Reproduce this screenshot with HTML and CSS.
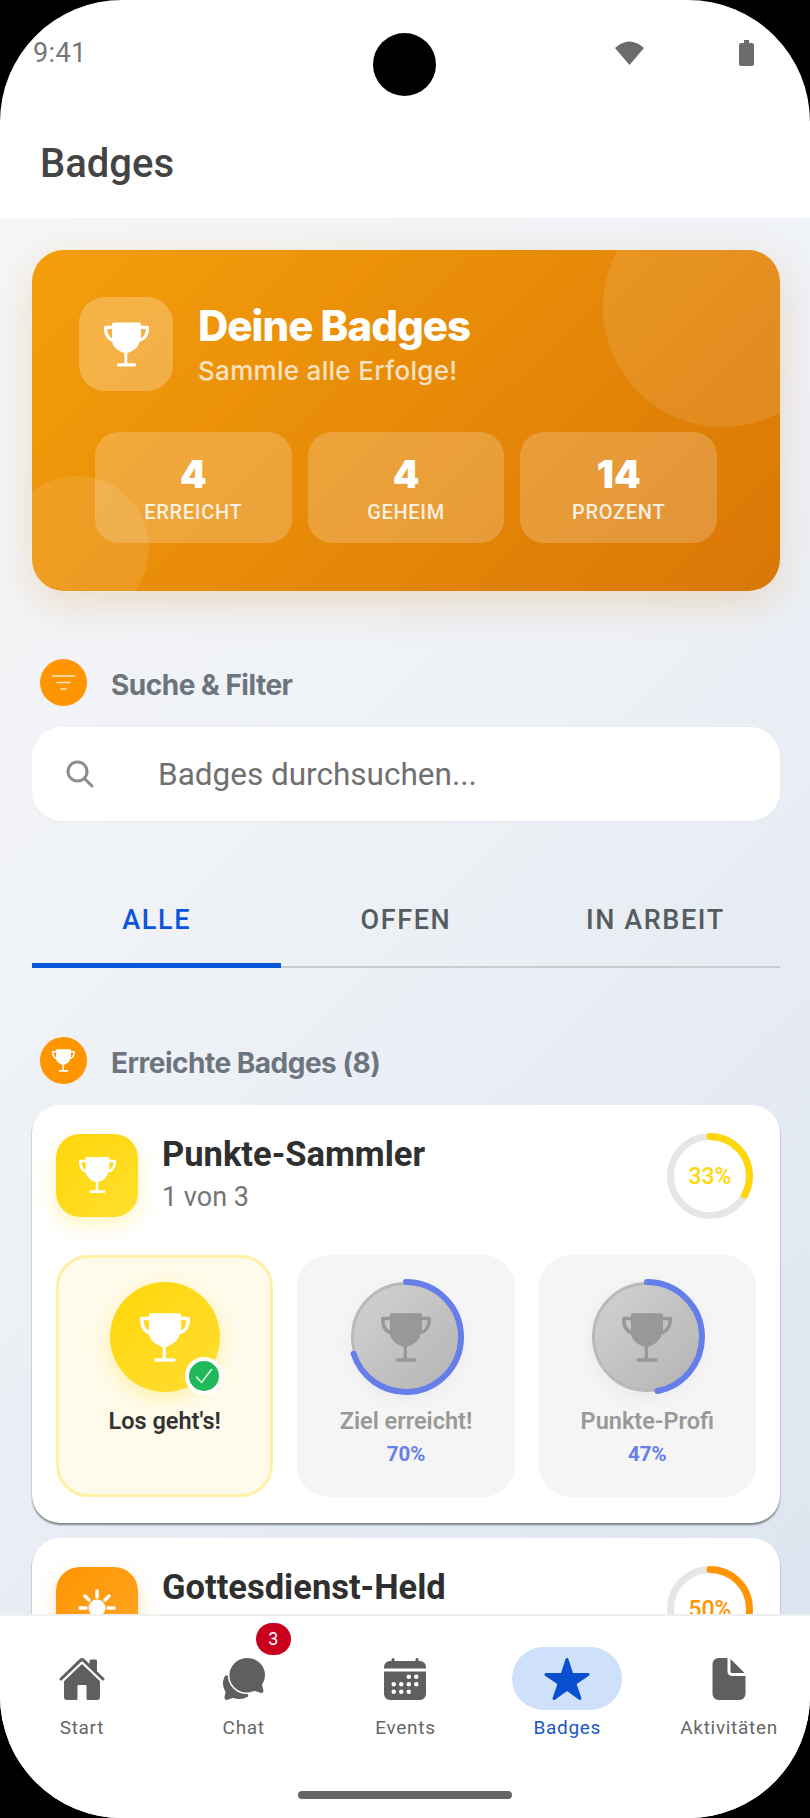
FILE: index.html
```html
<!DOCTYPE html>
<html lang="de">

<head>
    <meta charset="UTF-8">
    <meta name="viewport" content="width=device-width, initial-scale=1.0">
    <title>Badges</title>
    <link rel="stylesheet" href="styles.css">
</head>

<body>
    <svg class="defs" width="0" height="0">
        <symbol id="trophy" viewBox="32 48 448 436">
            <path fill="currentColor" fill-rule="evenodd" d="M464 80H400V64a16 16 0 0 0-16-16H128a16 16 0 0 0-16 16V80H48a16 16 0 0 0-16 16v16c0 54 30 112 76 125a8 8 0 0 1 6 6c6 27 24 52 51 73 21 16 44 27 64 32a8 8 0 0 1 6 8V444a8 8 0 0 1-8 8H176a16 16 0 0 0 0 32H336a16 16 0 0 0 0-32H272a8 8 0 0 1-8-8V356a8 8 0 0 1 6-8c20-5 43-16 64-32 27-21 45-46 51-73a8 8 0 0 1 6-6C450 224 480 166 480 112V96a16 16 0 0 0-16-16zM112 198a4 4 0 0 1-6 3c-10-6-18-15-23-24-8-12-18-34-19-65h44a4 4 0 0 1 4 4zM448 112c-1 31-11 53-19 65-5 9-13 18-23 24a4 4 0 0 1-6-3V116a4 4 0 0 1 4-4z" />
        </symbol>
    </svg>

    <div class="phone">
        <div class="camera"></div>

        <div class="status">
            <span class="time">9:41</span>
            <div class="status-icons">
                <svg class="wifi" viewBox="0 0 29 25">
                    <path fill="#6b6b6b" d="M0 8Q14.500-5 29 8L14.500 25Z" />
                </svg>
                <svg class="battery" viewBox="0 0 15 26">
                    <path fill="#6b6b6b" d="M5 0h5v3h3a2 2 0 0 1 2 2v19a2 2 0 0 1-2 2H2a2 2 0 0 1-2-2V5a2 2 0 0 1 2-2h3z" />
                </svg>
            </div>
        </div>

        <header class="header">
            <h1>Badges</h1>
        </header>

        <main class="content">
            <section class="hero">
                <div class="hero-circle top"></div>
                <div class="hero-circle bottom"></div>
                <div class="hero-head">
                    <div class="hero-icon">
                        <svg class="trophy-hero"><use href="#trophy" /></svg>
                    </div>
                    <div>
                        <h2>Deine Badges</h2>
                        <p>Sammle alle Erfolge!</p>
                    </div>
                </div>
                <div class="stats">
                    <div class="stat"><b>4</b><span>ERREICHT</span></div>
                    <div class="stat"><b>4</b><span>GEHEIM</span></div>
                    <div class="stat"><b>14</b><span>PROZENT</span></div>
                </div>
            </section>

            <div class="section-head first">
                <div class="section-icon">
                    <svg width="25" height="20" viewBox="0 0 25 20">
                        <path fill="none" stroke="#ffe9c4" stroke-width="1.600" stroke-linecap="round" d="M1.500 3h22M6 9.500h13M10 16h5" />
                    </svg>
                </div>
                <h3>Suche &amp; Filter</h3>
            </div>

            <div class="search">
                <svg width="28" height="28" viewBox="0 0 28 28">
                    <circle cx="11.500" cy="11.500" r="9.500" fill="none" stroke="#8c8c8c" stroke-width="3" />
                    <path d="M18.500 18.500L26 26" fill="none" stroke="#8c8c8c" stroke-width="3" stroke-linecap="round" />
                </svg>
                <span>Badges durchsuchen...</span>
            </div>

            <div class="tabs">
                <div class="tab active">ALLE</div>
                <div class="tab">OFFEN</div>
                <div class="tab">IN ARBEIT</div>
            </div>

            <div class="section-head">
                <div class="section-icon">
                    <svg class="trophy-small"><use href="#trophy" /></svg>
                </div>
                <h3>Erreichte Badges (8)</h3>
            </div>

            <section class="card">
                <div class="card-head">
                    <div class="card-icon yellow">
                        <svg class="trophy-card"><use href="#trophy" /></svg>
                    </div>
                    <div class="card-title">
                        <h4>Punkte-Sammler</h4>
                        <p>1 von 3</p>
                    </div>
                    <div class="ring ring-yellow">
                        <svg viewBox="0 0 86 86">
                            <circle class="ring-track" cx="43" cy="43" r="39.500" />
                            <circle class="ring-value" cx="43" cy="43" r="39.500" pathLength="100" stroke-dasharray="33 100" transform="rotate(-90 43 43)" />
                        </svg>
                        <span>33%</span>
                    </div>
                </div>

                <div class="tiles">
                    <div class="tile done">
                        <div class="medal">
                            <div class="disc gold">
                                <svg class="trophy-tile"><use href="#trophy" /></svg>
                            </div>
                            <div class="check">
                                <svg width="20" height="20" viewBox="0 0 20 20">
                                    <path d="M2.500 11l5 5.500L17.500 3.500" fill="none" stroke="#e6f8ec" stroke-width="1.500" stroke-linecap="round" stroke-linejoin="round" />
                                </svg>
                            </div>
                        </div>
                        <div class="tile-name">Los geht's!</div>
                    </div>

                    <div class="tile">
                        <div class="medal">
                            <div class="disc grey">
                                <svg class="trophy-tile"><use href="#trophy" /></svg>
                            </div>
                            <svg class="medal-ring" viewBox="0 0 116 116">
                                <circle cx="58" cy="58" r="55" pathLength="100" stroke-dasharray="70 100" transform="rotate(-90 58 58)" />
                            </svg>
                        </div>
                        <div class="tile-name">Ziel erreicht!</div>
                        <div class="tile-percent">70%</div>
                    </div>

                    <div class="tile">
                        <div class="medal">
                            <div class="disc grey">
                                <svg class="trophy-tile"><use href="#trophy" /></svg>
                            </div>
                            <svg class="medal-ring" viewBox="0 0 116 116">
                                <circle cx="58" cy="58" r="55" pathLength="100" stroke-dasharray="47 100" transform="rotate(-90 58 58)" />
                            </svg>
                        </div>
                        <div class="tile-name">Punkte-Profi</div>
                        <div class="tile-percent">47%</div>
                    </div>
                </div>
            </section>

            <section class="card">
                <div class="card-head">
                    <div class="card-icon orange">
                        <svg width="44" height="44" viewBox="0 0 44 44">
                            <circle cx="22" cy="22" r="8.500" fill="#fff" />
                            <path fill="none" stroke="#fff" stroke-width="3.500" stroke-linecap="round" d="M22 5v6M22 33v6M5 22h6M33 22h6M10 10l4 4M34 10l-4 4M10 34l4-4M34 34l-4-4" />
                        </svg>
                    </div>
                    <div class="card-title">
                        <h4>Gottesdienst-Held</h4>
                    </div>
                    <div class="ring ring-orange">
                        <svg viewBox="0 0 86 86">
                            <circle class="ring-track" cx="43" cy="43" r="39.500" />
                            <circle class="ring-value" cx="43" cy="43" r="39.500" pathLength="100" stroke-dasharray="50 100" transform="rotate(-90 43 43)" />
                        </svg>
                        <span>50%</span>
                    </div>
                </div>
            </section>
        </main>

        <nav class="nav">
            <div class="nav-items">
                <div class="nav-item">
                    <div class="nav-icon">
                        <svg viewBox="0 0 512 512">
                            <path d="M261.560 101.280a8 8 0 0 0-11.060 0L66.400 277.150a8 8 0 0 0-2.470 5.790L63.900 448a32 32 0 0 0 32 32H192a16 16 0 0 0 16-16V328a8 8 0 0 1 8-8h80a8 8 0 0 1 8 8v136a16 16 0 0 0 16 16h96.060a32 32 0 0 0 32-32V282.940a8 8 0 0 0-2.470-5.790z" />
                            <path d="M490.910 244.150l-74.800-71.560V64a16 16 0 0 0-16-16h-48a16 16 0 0 0-16 16v32l-57.920-55.380C272.770 35.140 264.710 32 256 32c-8.680 0-16.720 3.140-22.140 8.630l-212.700 203.500c-6.220 6-7 15.870-1.340 22.370A16 16 0 0 0 43 267.560L250.500 69.280a8 8 0 0 1 11.060 0l207.520 198.280a16 16 0 0 0 22.590-.44c6.140-6.360 5.630-16.860-.76-22.970z" />
                        </svg>
                    </div>
                    <span>Start</span>
                </div>
                <div class="nav-item">
                    <div class="nav-icon">
                        <svg viewBox="0 0 512 512">
                            <path d="M439.900 405.600a26.770 26.770 0 0 1-9.590-2l-56.780-20.130-.42-.17a9.880 9.880 0 0 0-3.910-.76 10.320 10.320 0 0 0-3.620.66c-1.380.52-13.810 5.190-26.850 8.770-7.070 1.940-31.680 8.270-51.430 8.270-50.480 0-97.680-19.400-132.890-54.630A183.380 183.380 0 0 1 100.300 215.100a175.900 175.900 0 0 1 4.060-37.580c8.790-40.620 32.070-77.570 65.550-104A194.760 194.760 0 0 1 290.300 32c52.210 0 100.860 20 137 56.180 34.160 34.270 52.880 79.330 52.730 126.870a177.860 177.860 0 0 1-30.300 99.150l-.19.280-.74 1c-.17.230-.34.450-.5.680l-.15.270a21.630 21.630 0 0 0-1.080 2.090l15.740 55.940a26.420 26.420 0 0 1 1.120 7.110 24 24 0 0 1-24.030 24.030z" />
                            <path d="M299.870 425.390a15.740 15.740 0 0 0-10.290-8.100c-5.780-1.530-12.520-1.270-17.670-1.650a201.780 201.780 0 0 1-128.820-58.750A199.210 199.210 0 0 1 86.400 244.160C85 234.420 85 232 85 232a16 16 0 0 0-28-10.580s-7.880 8.580-11.600 17.190a162.090 162.090 0 0 0 11.160 150.060C59 393 59 395 58.420 399.500c-2.730 14.110-7.510 39-10 51.910a24 24 0 0 0 8 22.920l.46.390A24.340 24.340 0 0 0 72 480a23.420 23.420 0 0 0 9-1.790l53.510-20.650a8.050 8.050 0 0 1 5.720 0c21.070 7.840 43 12 63.780 12a176 176 0 0 0 74.910-16.660c5.460-2.560 14-5.340 19-11.120a15 15 0 0 0 1.950-16.380z" />
                        </svg>
                        <div class="nav-badge">3</div>
                    </div>
                    <span>Chat</span>
                </div>
                <div class="nav-item">
                    <div class="nav-icon">
                        <svg viewBox="0 0 512 512">
                            <path d="M480 128a64 64 0 0 0-64-64h-16V48.450c0-8.610-6.620-16-15.230-16.430A16 16 0 0 0 368 48v16H144V48.450c0-8.610-6.620-16-15.230-16.430A16 16 0 0 0 112 48v16H96a64 64 0 0 0-64 64v12a4 4 0 0 0 4 4h440a4 4 0 0 0 4-4zM32 416a64 64 0 0 0 64 64h320a64 64 0 0 0 64-64V179a3 3 0 0 0-3-3H35a3 3 0 0 0-3 3zm344-208a24 24 0 1 1-24 24 24 24 0 0 1 24-24zm0 80a24 24 0 1 1-24 24 24 24 0 0 1 24-24zm-80-80a24 24 0 1 1-24 24 24 24 0 0 1 24-24zm0 80a24 24 0 1 1-24 24 24 24 0 0 1 24-24zm0 80a24 24 0 1 1-24 24 24 24 0 0 1 24-24zm-80-80a24 24 0 1 1-24 24 24 24 0 0 1 24-24zm0 80a24 24 0 1 1-24 24 24 24 0 0 1 24-24zm-80-80a24 24 0 1 1-24 24 24 24 0 0 1 24-24zm0 80a24 24 0 1 1-24 24 24 24 0 0 1 24-24z" />
                        </svg>
                    </div>
                    <span>Events</span>
                </div>
                <div class="nav-item active">
                    <div class="nav-icon">
                        <svg viewBox="0 0 512 512">
                            <path d="M394 480a16 16 0 0 1-9.390-3L256 383.760 127.390 477a16 16 0 0 1-24.550-18.080L153 310.350 23 221.200a16 16 0 0 1 9-29.200h160.380l48.400-148.950a16 16 0 0 1 30.440 0l48.400 149H480a16 16 0 0 1 9.050 29.200L359 310.350l50.130 148.530A16 16 0 0 1 394 480z" />
                        </svg>
                    </div>
                    <span>Badges</span>
                </div>
                <div class="nav-item">
                    <div class="nav-icon">
                        <svg viewBox="0 0 512 512">
                            <path d="M428 224H288a48 48 0 0 1-48-48V36a4 4 0 0 0-4-4h-92a64 64 0 0 0-64 64v320a64 64 0 0 0 64 64h224a64 64 0 0 0 64-64V228a4 4 0 0 0-4-4z" />
                            <path d="M419.220 188.590L275.410 44.780a2 2 0 0 0-3.410 1.410V176a16 16 0 0 0 16 16h129.810a2 2 0 0 0 1.410-3.410z" />
                        </svg>
                    </div>
                    <span>Aktivitäten</span>
                </div>
            </div>
            <div class="home-bar"></div>
        </nav>
    </div>
</body>

</html>
```

FILE: styles.css
```css
* {
    box-sizing: border-box;
}

html,
body {
    margin: 0;
    padding: 0;
    background: #000;
}

h1,
h2,
h3,
h4,
p {
    margin: 0;
}

svg {
    display: block;
}

.defs {
    position: absolute;
}

.phone {
    position: relative;
    width: 810px;
    height: 1818px;
    border-radius: 122px;
    overflow: hidden;
    background: #fff;
    display: flex;
    flex-direction: column;
    font-family: Roboto, "Noto Sans", sans-serif;
}

.camera {
    position: absolute;
    left: 373px;
    top: 33px;
    width: 63px;
    height: 63px;
    border-radius: 50%;
    background: #000;
}

/* status bar */
.status {
    height: 100px;
    padding: 37px 56px 0 33px;
    display: flex;
    justify-content: space-between;
    align-items: flex-start;
}

.time {
    font-size: 27px;
    line-height: 32px;
    letter-spacing: 0.4px;
    color: #757575;
}

.status-icons {
    display: flex;
    gap: 95px;
    padding-top: 3px;
}

.wifi {
    width: 29px;
    height: 25px;
}

.battery {
    width: 15px;
    height: 26px;
}

/* header */
.header {
    height: 118px;
    padding: 39px 40px 0;
}

.header h1 {
    font-size: 40px;
    line-height: 50px;
    font-weight: 500;
    color: #444;
}

/* scrolling part */
.content {
    flex: 1;
    min-height: 0;
    overflow: hidden;
    padding: 32px 30px 0 32px;
    background: linear-gradient(135deg, #f5f6f6 0%, #eef1f6 45%, #dde5f0 100%);
}

/* orange hero */
.hero {
    position: relative;
    overflow: hidden;
    height: 341px;
    padding: 47px;
    border-radius: 32px;
    color: #fff;
    background: linear-gradient(135deg, #f59e0b, #d97706);
    box-shadow: 0 12px 40px rgba(217, 119, 6, 0.2);
}

.hero-circle {
    position: absolute;
    border-radius: 50%;
    background: rgba(255, 255, 255, 0.1);
}

.hero-circle.top {
    width: 240px;
    height: 240px;
    top: -63px;
    right: -63px;
}

.hero-circle.bottom {
    width: 144px;
    height: 144px;
    left: -27px;
    bottom: -29px;
}

.hero-head {
    position: relative;
    display: flex;
    align-items: center;
    gap: 25px;
}

.hero-icon {
    width: 94px;
    height: 94px;
    border-radius: 26px;
    background: rgba(255, 255, 255, 0.25);
    display: flex;
    align-items: center;
    justify-content: center;
}

.trophy-hero {
    width: 45px;
    height: 45px;
    color: #fff;
}

.hero h2 {
    font-family: Inter, sans-serif;
    font-size: 42px;
    line-height: 48px;
    font-weight: 800;
    letter-spacing: -1px;
}

.hero p {
    margin-top: 6px;
    font-family: Inter, sans-serif;
    font-size: 26px;
    line-height: 30px;
    font-weight: 500;
    letter-spacing: 0.3px;
    color: rgba(255, 255, 255, 0.75);
}

.stats {
    position: relative;
    display: flex;
    gap: 16px;
    margin-top: 41px;
    padding: 0 16px;
}

.stat {
    flex: 1;
    height: 111px;
    padding-top: 2px;
    border-radius: 24px;
    background: rgba(255, 255, 255, 0.2);
    display: flex;
    flex-direction: column;
    align-items: center;
    justify-content: center;
}

.stat b {
    font-family: Inter, sans-serif;
    font-size: 38px;
    line-height: 44px;
    font-weight: 900;
}

.stat span {
    padding-top: 3px;
    font-size: 20px;
    line-height: 26px;
    font-weight: 500;
    letter-spacing: 0.7px;
    color: rgba(255, 255, 255, 0.85);
}

/* section titles */
.section-head {
    display: flex;
    align-items: center;
    gap: 24px;
    margin: 69px 0 21px;
    padding-left: 8px;
}

.section-head.first {
    margin-top: 68px;
}

.section-icon {
    width: 47px;
    height: 47px;
    border-radius: 50%;
    background: #ff9500;
    display: flex;
    align-items: center;
    justify-content: center;
}

.trophy-small {
    width: 23px;
    height: 23px;
    color: #fff;
}

.section-head h3 {
    padding-top: 4px;
    font-family: Inter, sans-serif;
    font-size: 28px;
    line-height: 32px;
    font-weight: 700;
    letter-spacing: -0.5px;
    color: #6c757d;
}

/* search */
.search {
    height: 94px;
    border-radius: 30px;
    background: #fff;
    padding-left: 34px;
    display: flex;
    align-items: center;
    gap: 64px;
    box-shadow: 0 1px 3px rgba(0, 0, 0, 0.03);
}

.search span {
    font-size: 31.500px;
    color: #707070;
}

/* tabs */
.tabs {
    display: flex;
    height: 96px;
    margin-top: 51px;
    border-bottom: 2px solid #c9cdd2;
}

.tab {
    flex: 1;
    display: flex;
    align-items: center;
    justify-content: center;
    padding-top: 4px;
    font-size: 27px;
    font-weight: 500;
    letter-spacing: 1.6px;
    color: #555c60;
    height: 96px;
    border-bottom: 5px solid transparent;
}

.tab.active {
    color: #0b55dc;
    border-bottom-color: #0b55dc;
}

/* badge cards */
.card {
    background: #fff;
    border-radius: 28px;
    padding: 28px 24px 26px;
    margin-bottom: 15px;
    box-shadow: 0 2px 2px rgba(0, 0, 0, 0.45);
}

.card-head {
    display: flex;
    align-items: center;
    gap: 24px;
}

.card-icon {
    width: 82px;
    height: 83px;
    margin-bottom: 2px;
    border-radius: 24px;
    display: flex;
    align-items: center;
    justify-content: center;
}

.card-icon.yellow {
    background: linear-gradient(135deg, #ffd60a, #ffdf2e);
    box-shadow: 0 8px 20px rgba(255, 214, 10, 0.25);
}

.card-icon.orange {
    background: linear-gradient(135deg, #ff9500, #ffa726);
    box-shadow: 0 8px 20px rgba(255, 149, 0, 0.25);
}

.trophy-card {
    width: 37px;
    height: 36px;
    color: #fff;
}

.card-title {
    flex: 1;
    align-self: flex-start;
    padding-top: 1px;
}

.card-title h4 {
    font-size: 34.500px;
    line-height: 40px;
    font-weight: 700;
    color: #2f2f2f;
}

.card-title p {
    margin-top: 5px;
    font-size: 27px;
    line-height: 36px;
    color: #757575;
}

.ring {
    display: grid;
    width: 86px;
    height: 86px;
    margin-right: 3px;
}

.ring svg,
.ring span {
    grid-area: 1 / 1;
}

.ring span {
    align-self: center;
    justify-self: center;
    font-size: 23px;
    font-weight: 500;
}

.ring circle {
    fill: none;
    stroke-width: 7px;
}

.ring-track {
    stroke: #e6e6e6;
}

.ring-value {
    stroke-linecap: round;
}

.ring-yellow span {
    color: #ffd60a;
}

.ring-yellow .ring-value {
    stroke: #ffd60a;
}

.ring-orange span {
    color: #ff9500;
}

.ring-orange .ring-value {
    stroke: #ff9500;
}

/* tiles */
.tiles {
    display: grid;
    grid-template-columns: repeat(3, 1fr);
    gap: 24px;
    margin-top: 36px;
}

.tile {
    height: 242px;
    padding-top: 24px;
    border-radius: 32px;
    background: #f5f5f5;
    display: flex;
    flex-direction: column;
    align-items: center;
}

.tile.done {
    padding-top: 21px;
    background: #fffbeb;
    border: 3px solid #fff0a8;
}

.medal {
    position: relative;
    width: 116px;
    height: 116px;
    display: flex;
    align-items: center;
    justify-content: center;
}

.disc {
    width: 110px;
    height: 110px;
    border-radius: 50%;
    display: flex;
    align-items: center;
    justify-content: center;
}

.disc.gold {
    background: linear-gradient(135deg, #ffd60a, #ffdd33);
    box-shadow: 0 6px 20px rgba(255, 214, 10, 0.3);
    color: #fff;
}

.disc.grey {
    background: linear-gradient(135deg, #d2d2d2, #b4b4b4);
    border: 3px solid #b9b9b9;
    box-shadow: 0 6px 20px rgba(0, 0, 0, 0.05);
    color: #989898;
}

.trophy-tile {
    width: 50px;
    height: 49px;
}

.check {
    position: absolute;
    right: 0;
    bottom: 0;
    width: 38px;
    height: 38px;
    border-radius: 50%;
    background: #22b85c;
    border: 4px solid #fff;
    display: flex;
    align-items: center;
    justify-content: center;
}

.medal-ring {
    position: absolute;
    left: 0;
    top: 0;
    width: 116px;
    height: 116px;
}

.medal-ring circle {
    fill: none;
    stroke: #667eea;
    stroke-width: 6px;
    stroke-linecap: round;
}

.tile-name {
    margin-top: 11px;
    font-size: 23.500px;
    line-height: 30px;
    font-weight: 600;
    color: #999;
}

.tile.done .tile-name {
    color: #333;
}

.tile-percent {
    margin-top: 6px;
    font-size: 20.500px;
    line-height: 24px;
    font-weight: 700;
    color: #667eea;
}

/* bottom navigation */
.nav {
    height: 204px;
    background: #fff;
    border-top: 2px solid #eef0f2;
    padding-top: 31px;
}

.nav-items {
    display: flex;
    padding-left: 1px;
}

.nav-item {
    flex: 1;
    display: flex;
    flex-direction: column;
    align-items: center;
    gap: 6px;
    font-size: 19px;
    line-height: 24px;
    letter-spacing: 0.7px;
    color: #666;
}

.nav-icon {
    position: relative;
    width: 110px;
    height: 63px;
    border-radius: 32px;
    display: flex;
    align-items: center;
    justify-content: center;
    color: #5f5f5f;
}

.nav-icon svg {
    width: 48px;
    height: 48px;
    fill: currentColor;
}

.nav-item.active {
    color: #1a56c4;
}

.nav-item.active .nav-icon {
    background: #cfe0fb;
    color: #0a4fd0;
}

.nav-badge {
    position: absolute;
    left: 67px;
    top: -24px;
    width: 35px;
    height: 32px;
    border-radius: 16px;
    background: #c8001e;
    color: #fff;
    font-size: 18px;
    line-height: 32px;
    letter-spacing: 0;
    text-align: center;
}

.home-bar {
    width: 214px;
    height: 8px;
    margin: 51px auto 0;
    border-radius: 4px;
    background: #666;
}
```
